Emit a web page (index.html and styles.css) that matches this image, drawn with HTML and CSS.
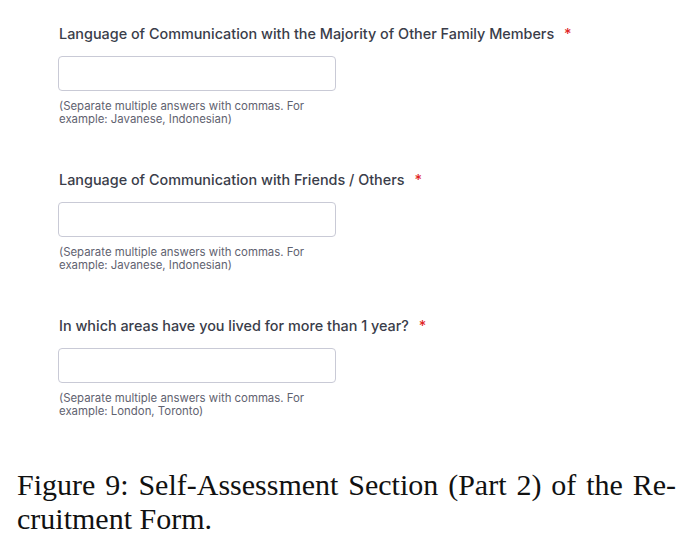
FILE: index.html
```html
<!DOCTYPE html>
<html>
<head>
<meta charset="utf-8">
<link rel="stylesheet" href="styles.css">
</head>
<body>
<div class="form">
  <div class="field">
    <div class="label">Language of Communication with the Majority of Other Family Members <span class="req">*</span></div>
    <div class="input"></div>
    <div class="help">(Separate multiple answers with commas. For<br>example: Javanese, Indonesian)</div>
  </div>
  <div class="field">
    <div class="label">Language of Communication with Friends / Others <span class="req">*</span></div>
    <div class="input"></div>
    <div class="help">(Separate multiple answers with commas. For<br>example: Javanese, Indonesian)</div>
  </div>
  <div class="field">
    <div class="label">In which areas have you lived for more than 1 year? <span class="req">*</span></div>
    <div class="input"></div>
    <div class="help">(Separate multiple answers with commas. For<br>example: London, Toronto)</div>
  </div>
</div>
<div class="caption">
  <span class="cap-line">Figure 9: Self-Assessment Section (Part 2) of the Re-</span>
  <span class="cap-last">cruitment Form.</span>
</div>
</body>
</html>
```
FILE: styles.css
```css
html, body {
  margin: 0;
  padding: 0;
  background: #ffffff;
}
.form {
  padding: 24px 0 0 58px;
}
.field {
  height: 146px;
}
.label {
  font-family: Inter, "Noto Sans", sans-serif;
  font-size: 14.4px;
  font-weight: 500;
  color: #3a3d4a;
  line-height: 20px;
  margin-left: 1px;
}
.req {
  color: #e02424;
  margin-left: 6px;
}
.input {
  margin-top: 12px;
  width: 276px;
  height: 33px;
  border: 1px solid #c9cad6;
  border-radius: 4px;
}
.help {
  font-family: Inter, "Noto Sans", sans-serif;
  font-size: 11.4px;
  line-height: 13px;
  color: #5f6270;
  margin-top: 9px;
  margin-left: 1px;
}
.caption {
  margin: 6px 15px 0 17px;
  font-family: "Liberation Serif", serif;
  font-size: 30px;
  line-height: 34px;
  color: #111;
}
.cap-line {
  display: block;
  text-align: justify;
  text-align-last: justify;
}
.cap-last {
  display: block;
}
```
